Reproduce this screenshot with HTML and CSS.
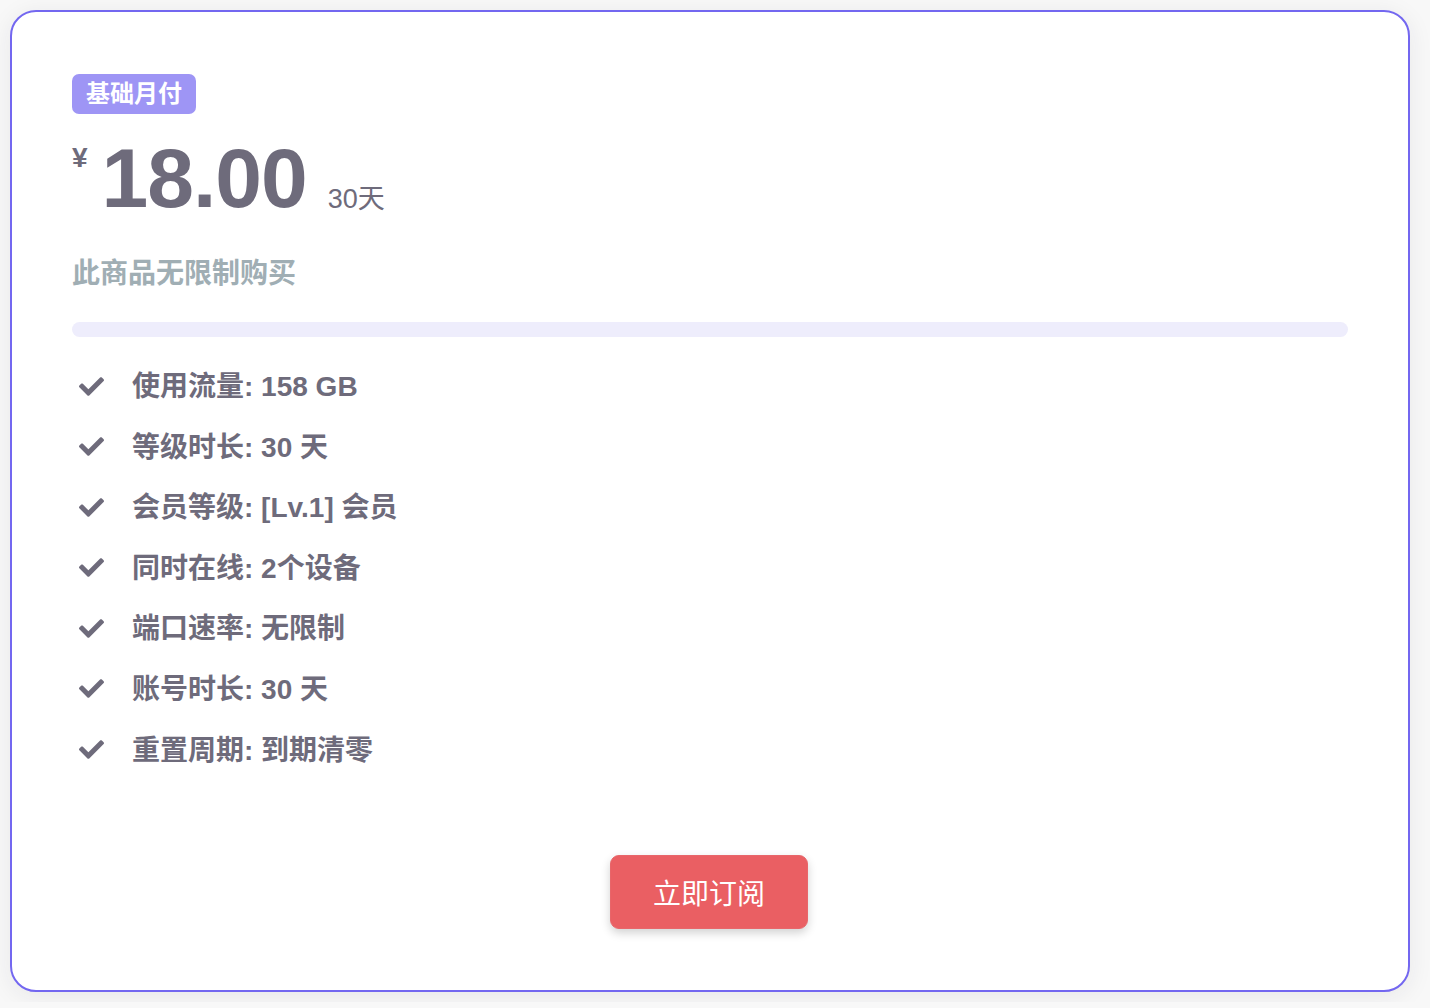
FILE: index.html
```html
<!DOCTYPE html>
<html lang="zh">
<head>
<meta charset="utf-8">
<link rel="stylesheet" href="styles.css">
</head>
<body>
<div class="card">
  <span class="badge">基础月付</span>
  <div class="price">
    <span class="currency">¥</span>
    <span class="amount">18.00</span>
    <span class="period">30天</span>
  </div>
  <div class="limit">此商品无限制购买</div>
  <div class="bar"></div>
  <ul class="features">
    <li><svg class="check" viewBox="0 0 512 512"><path d="M173.898 439.404l-166.4-166.4c-9.997-9.997-9.997-26.206 0-36.204l36.203-36.204c9.997-9.998 26.207-9.998 36.204 0L192 312.69 432.095 72.596c9.997-9.997 26.207-9.997 36.204 0l36.203 36.204c9.997 9.997 9.997 26.206 0 36.204l-294.4 294.401c-9.998 9.997-26.207 9.997-36.204-.001z"/></svg><span>使用流量: 158 GB</span></li>
    <li><svg class="check" viewBox="0 0 512 512"><path d="M173.898 439.404l-166.4-166.4c-9.997-9.997-9.997-26.206 0-36.204l36.203-36.204c9.997-9.998 26.207-9.998 36.204 0L192 312.69 432.095 72.596c9.997-9.997 26.207-9.997 36.204 0l36.203 36.204c9.997 9.997 9.997 26.206 0 36.204l-294.4 294.401c-9.998 9.997-26.207 9.997-36.204-.001z"/></svg><span>等级时长: 30 天</span></li>
    <li><svg class="check" viewBox="0 0 512 512"><path d="M173.898 439.404l-166.4-166.4c-9.997-9.997-9.997-26.206 0-36.204l36.203-36.204c9.997-9.998 26.207-9.998 36.204 0L192 312.69 432.095 72.596c9.997-9.997 26.207-9.997 36.204 0l36.203 36.204c9.997 9.997 9.997 26.206 0 36.204l-294.4 294.401c-9.998 9.997-26.207 9.997-36.204-.001z"/></svg><span>会员等级: [Lv.1] 会员</span></li>
    <li><svg class="check" viewBox="0 0 512 512"><path d="M173.898 439.404l-166.4-166.4c-9.997-9.997-9.997-26.206 0-36.204l36.203-36.204c9.997-9.998 26.207-9.998 36.204 0L192 312.69 432.095 72.596c9.997-9.997 26.207-9.997 36.204 0l36.203 36.204c9.997 9.997 9.997 26.206 0 36.204l-294.4 294.401c-9.998 9.997-26.207 9.997-36.204-.001z"/></svg><span>同时在线: 2个设备</span></li>
    <li><svg class="check" viewBox="0 0 512 512"><path d="M173.898 439.404l-166.4-166.4c-9.997-9.997-9.997-26.206 0-36.204l36.203-36.204c9.997-9.998 26.207-9.998 36.204 0L192 312.69 432.095 72.596c9.997-9.997 26.207-9.997 36.204 0l36.203 36.204c9.997 9.997 9.997 26.206 0 36.204l-294.4 294.401c-9.998 9.997-26.207 9.997-36.204-.001z"/></svg><span>端口速率: 无限制</span></li>
    <li><svg class="check" viewBox="0 0 512 512"><path d="M173.898 439.404l-166.4-166.4c-9.997-9.997-9.997-26.206 0-36.204l36.203-36.204c9.997-9.998 26.207-9.998 36.204 0L192 312.69 432.095 72.596c9.997-9.997 26.207-9.997 36.204 0l36.203 36.204c9.997 9.997 9.997 26.206 0 36.204l-294.4 294.401c-9.998 9.997-26.207 9.997-36.204-.001z"/></svg><span>账号时长: 30 天</span></li>
    <li><svg class="check" viewBox="0 0 512 512"><path d="M173.898 439.404l-166.4-166.4c-9.997-9.997-9.997-26.206 0-36.204l36.203-36.204c9.997-9.998 26.207-9.998 36.204 0L192 312.69 432.095 72.596c9.997-9.997 26.207-9.997 36.204 0l36.203 36.204c9.997 9.997 9.997 26.206 0 36.204l-294.4 294.401c-9.998 9.997-26.207 9.997-36.204-.001z"/></svg><span>重置周期: 到期清零</span></li>
  </ul>
  <div class="actions">
    <button class="subscribe">立即订阅</button>
  </div>
</div>
</body>
</html>
```
FILE: styles.css
```css
html, body {
  margin: 0;
  padding: 0;
  background: #f8f8f8;
}
body {
  padding: 10px;
  font-family: "Liberation Sans", "Noto Sans CJK SC", sans-serif;
  color: #6e6b7b;
}
.card {
  box-sizing: border-box;
  width: 1400px;
  height: 982px;
  background: #fff;
  border: 2px solid #7367f0;
  border-radius: 26px;
  padding: 62px 60px 60px 60px;
  box-shadow: 0 4px 24px rgba(34, 41, 47, 0.08);
  display: flex;
  flex-direction: column;
  align-items: flex-start;
}
.badge {
  display: inline-block;
  background: #9e95f5;
  color: #fff;
  font-weight: 700;
  font-size: 24px;
  line-height: 40px;
  height: 40px;
  padding: 0 14px;
  border-radius: 7px;
}
.price {
  display: flex;
  align-items: flex-start;
  margin-top: 22px;
  height: 88px;
}
.currency {
  font-size: 28px;
  font-weight: 700;
  line-height: 1;
  margin-top: 8px;
  margin-right: 14px;
}
.amount {
  font-size: 84px;
  font-weight: 700;
  line-height: 84px;
  letter-spacing: -1px;
}
.period {
  font-size: 27px;
  line-height: 1;
  align-self: flex-end;
  margin-left: 21px;
  margin-bottom: 11px;
}
.limit {
  margin-top: 32px;
  font-size: 28px;
  font-weight: 700;
  color: #a0aeb4;
  line-height: 36px;
}
.bar {
  margin-top: 30px;
  width: 100%;
  height: 15px;
  border-radius: 8px;
  background: #eeedfc;
}
.features {
  list-style: none;
  margin: 27px 0 0 0;
  padding: 0;
  display: flex;
  flex-direction: column;
  gap: 20.6px;
}
.features li {
  display: flex;
  align-items: center;
  height: 40px;
  font-size: 28px;
  font-weight: 700;
}
.check {
  width: 25px;
  height: 25px;
  fill: #6e6b7b;
  margin-left: 7px;
  margin-right: 28px;
  margin-top: 4px;
}
.actions {
  margin-top: auto;
  width: 100%;
  display: flex;
  justify-content: center;
}
.subscribe {
  width: 198px;
  height: 74px;
  border: 1px solid #e8666a;
  border-radius: 9px;
  background: #ea5f63;
  color: #fff;
  font-family: "Liberation Sans", "Noto Sans CJK SC", sans-serif;
  font-size: 28px;
  box-shadow: 0 4px 10px rgba(0, 0, 0, 0.18);
  margin-right: 2px;
  margin-bottom: 1px;
}
```
